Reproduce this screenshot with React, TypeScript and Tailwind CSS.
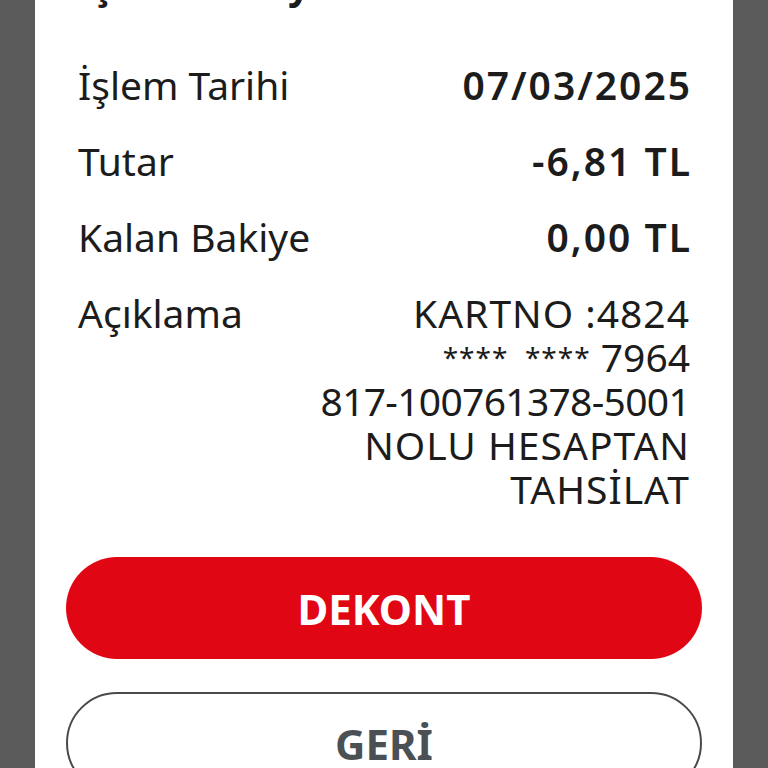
import React from "react";

const rows = [
  { label: "İşlem Tarihi", value: "07/03/2025" },
  { label: "Tutar", value: "-6,81 TL" },
  { label: "Kalan Bakiye", value: "0,00 TL" },
];

export default function App() {
  return (
    <div
      className="h-[768px] overflow-hidden bg-[#5b5b5b]"
      style={{ fontFamily: "'Noto Sans', Lato, sans-serif" }}
    >
      <div className="mx-[35px] flex h-full flex-col bg-white px-[31px]">
        <div className="-mt-[38px] px-[12px]">
          <h1 className="text-[39px] font-bold leading-[44px] text-[#1c1c1c]">
            İşlem Detayı
          </h1>

          <div className="mt-[57px] flex flex-col gap-[32px]">
            {rows.map((row) => (
              <div
                key={row.label}
                className="flex items-start justify-between text-[39px] leading-[44px] text-[#1c1c1c]"
              >
                <span>{row.label}</span>
                <span className="-mr-[2px] font-semibold tracking-[2px]">
                  {row.value}
                </span>
              </div>
            ))}

            <div className="flex items-start justify-between text-[39px] leading-[44px] text-[#1c1c1c]">
              <span>Açıklama</span>
              <div className="text-right">
                <div className="tracking-[1px]">KARTNO :4824</div>
                <div>
                  <span className="align-top text-[28px] tracking-[1px]">
                    ****&nbsp;&nbsp;****
                  </span>{" "}
                  7964
                </div>
                <div className="tracking-[-0.7px]">817-100761378-5001</div>
                <div className="tracking-[1px]">NOLU HESAPTAN</div>
                <div className="tracking-[1px]">TAHSİLAT</div>
              </div>
            </div>
          </div>
        </div>

        <div className="mt-[46px] flex flex-col gap-[33px]">
          <button className="flex h-[102px] shrink-0 items-center justify-center rounded-full bg-[#e10613] text-[42px] font-bold text-white">
            DEKONT
          </button>
          <button className="flex h-[102px] shrink-0 items-center justify-center rounded-full border-2 border-[#4a4a4a] bg-white text-[42px] font-bold text-[#4b5055]">
            GERİ
          </button>
        </div>
      </div>
    </div>
  );
}
